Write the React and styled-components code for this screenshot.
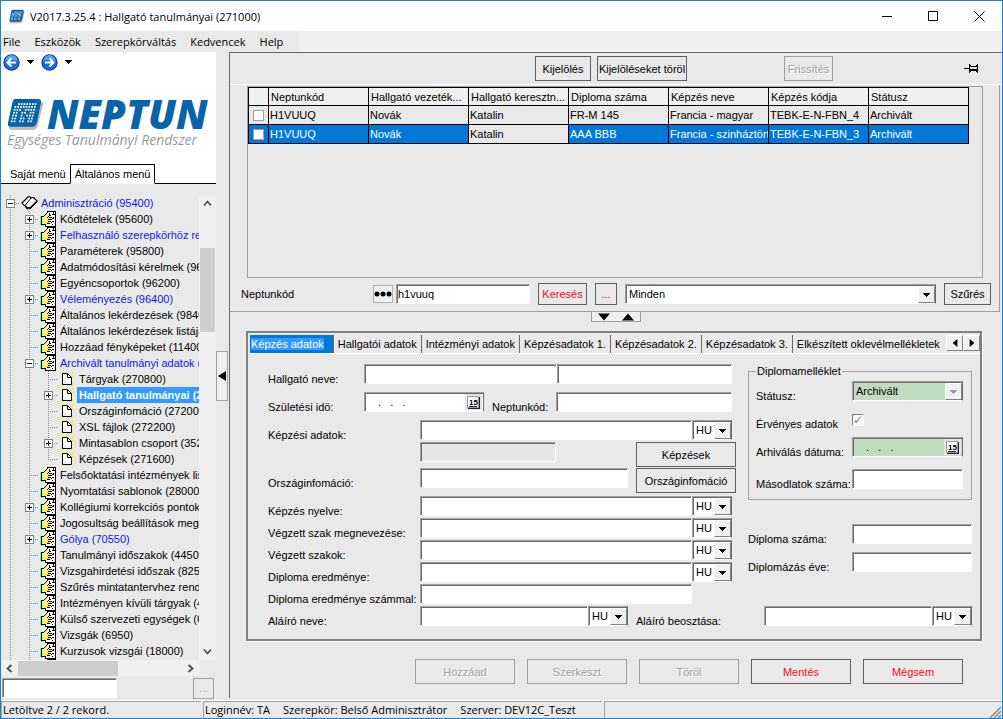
import React, { useState } from "react";
import styled, { createGlobalStyle, css } from "styled-components";

const UI_FONT = `"Liberation Sans", Arial, sans-serif`;
const TITLE_FONT = `"Open Sans", "Noto Sans", sans-serif`;

const menuItems = ["File", "Eszközök", "Szerepkörváltás", "Kedvencek", "Help"];

// level, label, expander sign, link colour
const treeItems = [
  { level: 0, label: "Adminisztráció (95400)", sign: "-", blue: true },
  { level: 1, label: "Kódtételek (95600)", sign: "+" },
  { level: 1, label: "Felhasználó szerepkörhöz rendelése (95700)", sign: "+", blue: true },
  { level: 1, label: "Paraméterek (95800)" },
  { level: 1, label: "Adatmódosítási kérelmek (96000)" },
  { level: 1, label: "Egyéncsoportok (96200)" },
  { level: 1, label: "Véleményezés (96400)", sign: "+", blue: true },
  { level: 1, label: "Általános lekérdezések (98400)" },
  { level: 1, label: "Általános lekérdezések listája (98600)" },
  { level: 1, label: "Hozzáad fényképeket (114000)" },
  { level: 1, label: "Archivált tanulmányi adatok (270600)", sign: "-", blue: true },
  { level: 2, label: "Tárgyak (270800)" },
  { level: 2, label: "Hallgató tanulmányai (271000)", sign: "+", selected: true },
  { level: 2, label: "Országinfomáció (272000)" },
  { level: 2, label: "XSL fájlok (272200)" },
  { level: 2, label: "Mintasablon csoport (352000)", sign: "+" },
  { level: 2, label: "Képzések (271600)", last: true },
  { level: 1, label: "Felsőoktatási intézmények listája (279000)" },
  { level: 1, label: "Nyomtatási sablonok (280000)" },
  { level: 1, label: "Kollégiumi korrekciós pontok (281000)", sign: "+" },
  { level: 1, label: "Jogosultság beállítások megtekintése" },
  { level: 1, label: "Gólya (70550)", sign: "+", blue: true },
  { level: 1, label: "Tanulmányi időszakok (4450)" },
  { level: 1, label: "Vizsgahirdetési időszak (82500)" },
  { level: 1, label: "Szűrés mintatantervhez rendelés" },
  { level: 1, label: "Intézményen kívüli tárgyak (4600)" },
  { level: 1, label: "Külső szervezeti egységek (6800)" },
  { level: 1, label: "Vizsgák (6950)" },
  { level: 1, label: "Kurzusok vizsgái (18000)" },
  { level: 1, label: "" },
];

const columns = [
  "Neptunkód",
  "Hallgató vezeték...",
  "Hallgató keresztn...",
  "Diploma száma",
  "Képzés neve",
  "Képzés kódja",
  "Státusz",
];

const rows = [
  ["H1VUUQ", "Novák", "Katalin", "FR-M 145", "Francia - magyar", "TEBK-E-N-FBN_4", "Archivált"],
  ["H1VUUQ", "Novák", "Katalin", "AAA BBB", "Francia - szinháztörténet", "TEBK-E-N-FBN_3", "Archivált"],
];

const formTabs = [
  "Képzés adatok",
  "Hallgatói adatok",
  "Intézményi adatok",
  "Képzésadatok 1.",
  "Képzésadatok 2.",
  "Képzésadatok 3.",
  "Elkészített oklevélmellékletek",
];

// dots of the NEPTUN mark
const markDots = ["01111111", "11111111", "11101111", "11011011", "11010111", "11011011", "11011011"];

const Caret = ({ color = "#000" }) => (
  <svg width="7" height="4" viewBox="0 0 7 4" shapeRendering="crispEdges">
    <path d="M0 0h7v1H6v1H5v1H4v1H3V3H2V2H1V1H0z" fill={color} />
  </svg>
);

const NeptunMark = ({ width, height }) => (
  <svg width={width} height={height} viewBox="0 0 36 32">
    <path d="M10 3h22q4 0 3 4l-5 20q-1 4-5 4H5q-4 0-3-4l4-20q1-4 4-4z" fill="#b9bcc0" />
    <path d="M8 1h22q4 0 3 4l-4 19q-1 4-5 4H4q-4 0-3-4L5 5q1-4 3-4z" fill="#0863a9" />
    {markDots.map((line, y) =>
      line.split("").map((dot, x) =>
        dot === "1" ? <rect key={`${x}-${y}`} x={8 + x * 2.7 - y * 0.7} y={5 + y * 2.8} width="1.7" height="1.7" fill="#fff" /> : null
      )
    )}
  </svg>
);

const RoundArrow = ({ flip }) => (
  <svg width="17" height="17" viewBox="0 0 17 17">
    <circle cx="8.5" cy="8.5" r="7.6" fill="#1d6fe0" stroke="#0b3c9c" strokeWidth="1.2" />
    <path d="M2.5 7a6 6 0 0 1 12 0q-6-3-12 0z" fill="#5aa4f5" />
    <path
      d="M13 8.5H5M8.5 4.5l-4 4 4 4"
      fill="none"
      stroke="#fff"
      strokeWidth="2"
      transform={flip ? "rotate(180 8.5 8.5)" : undefined}
    />
  </svg>
);

const BookIcon = () => (
  <svg width="17" height="14" viewBox="0 0 17 14">
    <path d="M1 7l6-6q2-1 3 1 2-1 3 0l3 3-7 7q-1-1-3 0-1-1-1-2-2 0-4-3z" fill="#fff" stroke="#000" strokeWidth="1.2" />
    <path d="M10 2L4 9.500M4 10l2 3q2-1 3 0l7-7" fill="none" stroke="#000" />
  </svg>
);

const HandIcon = () => (
  <svg width="17" height="17" viewBox="0 0 17 17" shapeRendering="crispEdges">
    <path d="M0 5h1v9H0zM1 14h2v1H1z" fill="#4ff" />
    <path d="M7 1h7l2 3v12H5v-3h2z" fill="#fff" />
    <path d="M2 6h3V5h1V4h1V3h2v3h3v2h-1v2h-1v3H5v1H2z" fill="#fff27a" />
    <path
      d="M7 0h8v1H7zM15 0h1v16h-1zM5 15h10v1H5zM1 5h3v1H1zM1 6h1v8H1zM2 13h3v1H2zM5 13h1v2H5zM4 4h1v1H4zM5 3h1v1H5zM6 2h1v1H6zM7 1h1v1H7zM9 2h1v3H9zM8 5h1v1H8zM7 6h1v1H7zM9 6h3v1H9zM12 7h1v1h-1zM8 8h4v1H8zM8 10h3v1H8zM7 12h3v1H7zM11 11h1v1h-1zM12 3h1v1h-1zM12 10h2v1h-2zM12 13h1v1h-1zM13 1h1v3h-1zM14 3h1v1h-1zM13 6h1v2h-1zM10 4h1v1h-1z"
      fill="#000"
    />
  </svg>
);

const PageIcon = () => (
  <svg width="15" height="16" viewBox="0 0 15 16">
    <path d="M1 1l2 2M6 0v2M14 1l-3 3M15 6h-3M14 14l-3-2M1 14l2-1" stroke="#f2ef5a" strokeWidth="2" />
    <path d="M2.500 2.500h5l4 4v7h-9z" fill="#fff" stroke="#000" />
    <path d="M7.500 2.500v4h4" fill="none" stroke="#000" />
  </svg>
);

const Chevron = ({ angle }) => (
  <svg width="9" height="9" viewBox="0 0 9 9">
    <path d="M1 6.500l3.500-4L8 6.500" fill="none" stroke="#505050" strokeWidth="1.800" transform={`rotate(${angle} 4.5 4.5)`} />
  </svg>
);

const Triangle = ({ angle = 0, size = 10 }) => (
  <svg width={size} height={size} viewBox="0 0 10 10">
    <path d="M0 2h10L5 8z" transform={`rotate(${angle} 5 5)`} />
  </svg>
);

const CalendarIcon = () => (
  <svg width="13" height="13" viewBox="0 0 13 13">
    <path d="M1 1h12v12H1z" fill="#223" />
    <path d="M.5 .5h11v11H.5z" fill="#fff" stroke="#99a" />
    <path d="M2 10h8v1H2z" fill="#223" />
    <text x="2" y="9" fontSize="8" fontWeight="bold" fontFamily="Liberation Sans">15</text>
  </svg>
);

const Combo = ({ label, options, grow, green, disabled, width }) => (
  <ComboBox $grow={grow} $green={green} $width={width}>
    <select aria-label={label} disabled={disabled}>
      {options.map((o) => (
        <option key={o}>{o}</option>
      ))}
    </select>
    <ComboArrow>
      <Caret color={disabled ? "#9a9a9a" : "#000"} />
    </ComboArrow>
  </ComboBox>
);

const DateField = ({ id, green }) => (
  <DateBox $green={green}>
    <input id={id} defaultValue=".   .   ." />
    <button aria-label="Naptár">
      <CalendarIcon />
    </button>
  </DateBox>
);

const LangRow = ({ id, label, height = 22, noLang }) => (
  <FormRow $height={height}>
    <Label htmlFor={id} $width={152}>{label}</Label>
    <Field id={id} />
    {noLang ? <Spacer $width={40} /> : <Combo label={`${label} nyelv`} options={["HU", "EN"]} width={40} />}
  </FormRow>
);

const TreeRow = ({ item }) => {
  const { level, label, sign, blue, selected, last } = item;
  const cells = [];
  for (let i = 0; i < level; i++) cells.push(<Guide key={i} />);
  return (
    <TreeLine role="treeitem">
      {cells}
      <Guide $branch $last={last}>
        {sign && (
          <svg width="9" height="9" viewBox="0 0 9 9" shapeRendering="crispEdges">
            <path d="M0 0h9v9H0z" fill="#808080" />
            <path d="M1 1h7v7H1z" fill="#fff" />
            <path d={sign === "+" ? "M2 4h5v1H2zM4 2h1v5H4z" : "M2 4h5v1H2z"} />
          </svg>
        )}
      </Guide>
      <TreeIcon>
        {level === 0 && <BookIcon />}
        {level === 1 && <HandIcon />}
        {level === 2 && <PageIcon />}
      </TreeIcon>
      <TreeText $blue={blue} $selected={selected}>{label}</TreeText>
    </TreeLine>
  );
};

const Sidebar = () => (
  <Side>
    <White>
      <NavRow>
        <button aria-label="Vissza"><RoundArrow /></button>
        <button aria-label="Előzmények"><Caret /></button>
        <button aria-label="Előre"><RoundArrow flip /></button>
        <button aria-label="Következők"><Caret /></button>
      </NavRow>
      <Logo>
        <NeptunMark width={37} height={33} />
        <LogoText>NEPTUN</LogoText>
      </Logo>
      <Slogan>Egységes Tanulmányi Rendszer</Slogan>
      <SideTabs>
        <SideTab>Saját menü</SideTab>
        <SideTab $active>Általános menü</SideTab>
        <TabFill />
      </SideTabs>
    </White>
    <TreeArea>
      <Tree role="tree">
        {treeItems.map((item, i) => (
          <TreeRow key={i} item={item} />
        ))}
      </Tree>
      <VScroll>
        <Chevron angle={0} />
        <VThumb />
        <Chevron angle={180} />
      </VScroll>
    </TreeArea>
    <HScroll>
      <Chevron angle={-90} />
      <HThumb />
      <Chevron angle={90} />
    </HScroll>
    <SideSearch>
      <Field aria-label="Menü keresése" />
      <Button $width={21} disabled>...</Button>
    </SideSearch>
  </Side>
);

const ListPanel = () => {
  const [selected, setSelected] = useState(1);
  return (
    <Upper>
      <GridBox>
        <Table>
          <thead>
            <tr>
              <th />
              {columns.map((c) => (
                <th key={c}>{c}</th>
              ))}
            </tr>
          </thead>
          <tbody>
            {rows.map((row, i) => (
              <Record key={i} $selected={selected === i} onClick={() => setSelected(i)}>
                <td><RowCheck type="checkbox" aria-label={`${i + 1}. sor`} /></td>
                {row.map((cell, j) => (
                  <td key={j}>{cell}</td>
                ))}
              </Record>
            ))}
          </tbody>
        </Table>
      </GridBox>
      <SearchRow>
        <SearchLabel htmlFor="kod">Neptunkód</SearchLabel>
        <DotsButton aria-label="Feltételek">
          <svg width="18" height="6" viewBox="0 0 18 6">
            <circle cx="3" cy="3" r="2.500" />
            <circle cx="9" cy="3" r="2.500" />
            <circle cx="15" cy="3" r="2.500" />
          </svg>
        </DotsButton>
        <SearchField id="kod" defaultValue="h1vuuq" />
        <Button $width={49} $red $height={22}>Keresés</Button>
        <Button $width={22} $red $height={22}>...</Button>
        <Combo label="Szűrő" options={["Minden"]} grow />
        <Button $width={47} $height={22}>Szűrés</Button>
      </SearchRow>
    </Upper>
  );
};

const DetailForm = () => {
  const [active, setActive] = useState(0);
  return (
    <Detail>
      <TabStrip role="tablist">
        {formTabs.map((t, i) => (
          <Tab key={t} role="tab" $active={active === i} onClick={() => setActive(i)}>
            <span>{t}</span>
          </Tab>
        ))}
        <TabScroll aria-label="Balra"><Triangle angle={90} size={8} /></TabScroll>
        <TabScroll aria-label="Jobbra"><Triangle angle={-90} size={8} /></TabScroll>
      </TabStrip>
      <FormBody>
        <FormColumns>
          <LeftColumn>
            <FormRow $height={28}>
              <Label htmlFor="nev" $width={96}>Hallgató neve:</Label>
              <Field id="nev" $grow={11} />
              <Field aria-label="Keresztnév" $grow={10} />
            </FormRow>
            <FormRow $height={28}>
              <Label htmlFor="szul" $width={96}>Születési idö:</Label>
              <DateSlot><DateField id="szul" /></DateSlot>
              <Label htmlFor="nk" $width={64}>Neptunkód:</Label>
              <Field id="nk" />
            </FormRow>
            <LangRow id="kepzesi" label="Képzési adatok:" />
            <FormRow $height={26} $wide>
              <Label as="span" $width={152} />
              <Field aria-label="Képzés kódja" disabled $fixed={136} />
              <Button $width={100}>Képzések</Button>
            </FormRow>
            <FormRow $height={28} $wide>
              <Label htmlFor="orszag" $width={152}>Országinfomáció:</Label>
              <Field id="orszag" />
              <Spacer $width={8} />
              <Button $width={100}>Országinfomáció</Button>
            </FormRow>
            <LangRow id="nyelv" label="Képzés nyelve:" />
            <LangRow id="megnev" label="Végzett szak megnevezése:" />
            <LangRow id="szakok" label="Végzett szakok:" />
            <LangRow id="eredmeny" label="Diploma eredménye:" />
            <LangRow id="szammal" label="Diploma eredménye számmal:" noLang />
          </LeftColumn>
          <RightColumn>
            <Group>
              <legend>Diplomamelléklet</legend>
              <FormRow $height={28} $wide>
                <Label $width={96}>Státusz:</Label>
                <Combo label="Státusz" options={["Archivált"]} grow green disabled />
              </FormRow>
              <FormRow $height={28} $wide>
                <Label htmlFor="erv" $width={96}>Érvényes adatok</Label>
                <ValidCheck id="erv" type="checkbox" defaultChecked />
              </FormRow>
              <FormRow $height={32} $wide>
                <Label htmlFor="arch" $width={96}>Arhiválás dátuma:</Label>
                <DateField id="arch" green />
              </FormRow>
              <FormRow $height={20} $wide>
                <Label htmlFor="masod" $width={96}>Másodlatok száma:</Label>
                <Field id="masod" />
              </FormRow>
            </Group>
            <FormRow $height={28} $wide>
              <Label htmlFor="dszam" $width={104}>Diploma száma:</Label>
              <Field id="dszam" />
            </FormRow>
            <FormRow $height={28} $wide>
              <Label htmlFor="dev" $width={104}>Diplomázás éve:</Label>
              <Field id="dev" />
            </FormRow>
          </RightColumn>
        </FormColumns>
        <FormRow $height={22} $wide>
          <Label htmlFor="alairo" $width={152}>Aláíró neve:</Label>
          <Field id="alairo" />
          <Combo label="Aláíró nyelv" options={["HU", "EN"]} width={40} />
          <Spacer $width={8} />
          <Label htmlFor="beoszt" $width={128}>Aláíró beosztása:</Label>
          <Field id="beoszt" />
          <Combo label="Beosztás nyelv" options={["HU", "EN"]} width={40} />
        </FormRow>
      </FormBody>
    </Detail>
  );
};

const App = () => (
  <>
    <GlobalStyle />
    <Window>
      <TitleBar>
        <NeptunMark width={16} height={15} />
        <h1>V2017.3.25.4 : Hallgató tanulmányai (271000)</h1>
        <WinButton aria-label="Kis méret">
          <svg width="11" height="11"><path d="M0 5.500h10" stroke="#000" /></svg>
        </WinButton>
        <WinButton aria-label="Teljes méret">
          <svg width="11" height="11"><path d="M.5 .5h9v9h-9z" stroke="#000" fill="none" /></svg>
        </WinButton>
        <WinButton aria-label="Bezárás">
          <svg width="11" height="11"><path d="M.5 .5l10 10M10.500 .5l-10 10" stroke="#000" /></svg>
        </WinButton>
      </TitleBar>
      <MenuBar>
        {menuItems.map((m) => (
          <button key={m}>{m}</button>
        ))}
      </MenuBar>
      <Body>
        <Sidebar />
        <Splitter>
          <button aria-label="Menü elrejtése">
            <svg width="8" height="10" viewBox="0 0 8 10"><path d="M8 0v10L0 5z" /></svg>
          </button>
        </Splitter>
        <Main>
          <Toolbar>
            <Button $width={56}>Kijelölés</Button>
            <Button $width={90}>Kijelöléseket töröl</Button>
            <Spacer $width={85} />
            <Button $width={49} disabled>Frissítés</Button>
            <Spacer $width={119} />
            <PinButton aria-label="Rögzítés">
              <svg width="15" height="11" viewBox="0 0 15 11" shapeRendering="crispEdges">
                <path d="M0 5h6v1H0zM5 1h1v9H5zM6 3h7v1H6zM6 7h7v1H6zM6 6h7v1H6zM13 1h1v9h-1zM12 2h1v1h-1zM12 8h1v1h-1zM6 2h1v1H6zM6 8h1v1H6z" />
              </svg>
            </PinButton>
          </Toolbar>
          <ListPanel />
          <Collapser>
            <button aria-label="Le"><Triangle size={12} /></button>
            <button aria-label="Fel"><Triangle angle={180} size={12} /></button>
          </Collapser>
          <DetailForm />
          <Actions>
            <Button $width={100} disabled>Hozzáad</Button>
            <Button $width={100} disabled>Szerkeszt</Button>
            <Button $width={100} disabled>Töröl</Button>
            <Button $width={100} $red>Mentés</Button>
            <Button $width={100} $red>Mégsem</Button>
          </Actions>
        </Main>
      </Body>
      <StatusBar>
        <StatusCell>Letöltve 2 / 2 rekord.</StatusCell>
        <StatusCell>
          <span>Loginnév: TA</span>
          <span>Szerepkör: Belső Adminisztrátor</span>
          <span>Szerver: DEV12C_Teszt</span>
        </StatusCell>
        <StatusCell>
          <svg width="12" height="12" viewBox="0 0 12 12"><path d="M1 12L12 1M5 12l7-7M9 12l3-3" stroke="#8a8a8a" strokeWidth="1.500" /></svg>
        </StatusCell>
      </StatusBar>
    </Window>
  </>
);

export default App;

const GlobalStyle = createGlobalStyle`
  * {
    box-sizing: border-box;
  }
  body {
    margin: 0;
    font: 11px ${UI_FONT};
    color: #000;
    background: #e9e9e9;
  }
  button, input, select {
    font: inherit;
    color: inherit;
    padding: 0;
    margin: 0;
    border-radius: 0;
  }
  button {
    border: 0;
    background: none;
  }
  svg {
    display: block;
    flex: none;
  }
`;

const sunken = css`
  border: 1px solid;
  border-color: #a0a0a0 #fff #fff #a0a0a0;
  padding: 1px;
  box-shadow: inset 1px 1px #696969;
`;

const raised = css`
  border: 1px solid;
  border-color: #fff #808080 #808080 #fff;
  background: #f0f0f0;
`;

const Window = styled.div`
  display: flex;
  flex-direction: column;
  height: 100vh;
  border: 1px solid #1883d7;
  border-top-color: #3c77b0;
  background: #e9e9e9;
`;

const TitleBar = styled.header`
  display: flex;
  align-items: center;
  height: 30px;
  flex: none;
  padding-left: 8px;
  background: #fff;
  font-family: ${TITLE_FONT};

  h1 {
    flex: 1;
    margin: 0 0 0 5px;
    font-size: 11px;
    font-weight: 400;
    white-space: nowrap;
  }
`;

const WinButton = styled.button`
  display: flex;
  align-items: center;
  justify-content: center;
  width: 46px;
  height: 28px;
`;

const MenuBar = styled.nav`
  display: flex;
  align-items: center;
  gap: 14px;
  height: 21px;
  flex: none;
  padding-left: 2px;
  background: linear-gradient(90deg, #e9e9e9 298px, #f0f0f0 298px);
  font: 11px ${TITLE_FONT};
`;

const Body = styled.div`
  display: flex;
  flex: 1;
  min-height: 0;
`;

const Side = styled.aside`
  display: flex;
  flex-direction: column;
  width: 215px;
  flex: none;
`;

const White = styled.div`
  background: #fff;
`;

const NavRow = styled.div`
  display: flex;
  align-items: center;
  gap: 7px;
  height: 20px;
  padding-left: 2px;
`;

const Logo = styled.div`
  display: flex;
  align-items: center;
  gap: 3px;
  height: 36px;
  margin-top: 24px;
  padding-left: 6px;
`;

const LogoText = styled.strong`
  color: #0863a9;
  font: italic 800 40px/36px ${TITLE_FONT};
`;

const Slogan = styled.div`
  height: 20px;
  padding-left: 6px;
  color: #9b9b9b;
  font: italic 14px/16px ${TITLE_FONT};
  white-space: nowrap;
`;

const SideTabs = styled.div`
  display: flex;
  margin-top: 12px;
  height: 20px;
`;

const SideTab = styled.button`
  display: flex;
  align-items: center;
  white-space: nowrap;
  border-bottom: 1px solid #000;
  padding: 0 4px 0 9px;

  ${(p) =>
    p.$active &&
    css`
      border: 1px solid #000;
      border-bottom-color: #fff;
      padding: 0 4px;
    `}
`;

const TabFill = styled.span`
  flex: 1;
  border-bottom: 1px solid #000;
`;

const TreeArea = styled.div`
  display: flex;
  flex: 1;
  min-height: 0;
  padding-top: 11px;
`;

const Tree = styled.div`
  flex: 1;
  min-width: 0;
  overflow: hidden;
`;

const TreeLine = styled.div`
  display: flex;
  height: 16px;
`;

const dotted = "repeating-linear-gradient(#8a8a8a 0 1px, transparent 1px 2px)";
const dottedX = "repeating-linear-gradient(90deg, #8a8a8a 0 1px, transparent 1px 2px)";

const Guide = styled.span`
  display: flex;
  align-items: center;
  justify-content: center;
  width: 19px;
  flex: none;
  background-image: ${dotted}, ${(p) => (p.$branch ? dottedX : "none")};
  background-size: 1px ${(p) => (p.$last ? "8px" : "16px")}, 10px 1px;
  background-position: 9px 0, 9px 8px;
  background-repeat: no-repeat;
`;

const TreeIcon = styled.span`
  display: flex;
  align-items: center;
  justify-content: center;
  width: 19px;
  flex: none;
`;

const TreeText = styled.span`
  padding: 0 2px;
  line-height: 16px;
  white-space: nowrap;
  color: ${(p) => (p.$selected ? "#fff" : p.$blue ? "#1414f0" : "#000")};
  background: ${(p) => (p.$selected ? "#3399ff" : "none")};
  font-weight: ${(p) => (p.$selected ? 700 : 400)};
`;

const VScroll = styled.div`
  display: flex;
  flex-direction: column;
  align-items: center;
  justify-content: space-between;
  width: 17px;
  padding: 4px 0;
  background: #f0f0f0;
`;

const VThumb = styled.div`
  width: 15px;
  height: 84px;
  margin: 40px 0 auto;
  background: #cdcdcd;
`;

const HScroll = styled.div`
  display: flex;
  align-items: center;
  height: 16px;
  margin-right: 16px;
  padding: 0 5px 0 4px;
  background: #f0f0f0;
`;

const HThumb = styled.div`
  width: 100px;
  height: 15px;
  margin: 0 auto 0 4px;
  background: #cdcdcd;
`;

const Field = styled.input`
  ${sunken}
  flex: ${(p) => (p.$fixed ? "none" : p.$grow || 1)};
  width: ${(p) => (p.$fixed ? `${p.$fixed}px` : "0")};
  min-width: 0;
  height: 20px;
  background: #fff;

  &:disabled {
    background: #e6e6e6;
  }
`;

const SideSearch = styled.div`
  display: flex;
  justify-content: space-between;
  align-items: center;
  height: 24px;
  padding: 0 2px 0 1px;

  ${Field} {
    flex: none;
    width: 115px;
  }
  button {
    height: 21px;
  }
`;

const Splitter = styled.div`
  display: flex;
  align-items: center;
  width: 13px;
  flex: none;

  button {
    display: flex;
    align-items: center;
    justify-content: center;
    width: 12px;
    height: 50px;
    border: 1px solid #a0a0a0;
    background: #f0f0f0;
  }
`;

const Main = styled.main`
  display: flex;
  flex-direction: column;
  flex: 1;
  min-width: 0;
  margin-bottom: 2px;
  border-left: 1px solid #696969;
  border-top: 1px solid #696969;
`;

const Button = styled.button`
  width: ${(p) => p.$width}px;
  height: ${(p) => p.$height || 25}px;
  flex: none;
  border: 1px solid #606060;
  background: #e9e9e9;
  color: ${(p) => (p.$red ? "#f01020" : "#000")};
  white-space: nowrap;

  &:disabled {
    border-color: #a0a0a0;
    color: #a0a0a0;
    text-shadow: 1px 1px #fff;
  }
`;

const Spacer = styled.span`
  width: ${(p) => p.$width}px;
  flex: none;
`;

const Toolbar = styled.div`
  display: flex;
  align-items: center;
  justify-content: flex-end;
  gap: 6px;
  height: 32px;
  flex: none;
  padding-right: 23px;
  border-bottom: 1px solid #fff;
`;

const PinButton = styled.button`
  width: 15px;
`;

const Upper = styled.section`
  display: flex;
  flex-direction: column;
  flex: 1;
  min-height: 0;
  margin-right: 2px;
  border-right: 1px solid #a0a0a0;
  border-bottom: 1px solid #a0a0a0;
`;

const GridBox = styled.div`
  flex: 1;
  min-height: 60px;
  overflow: hidden;
  margin: 1px 16px 0 17px;
  border: 1px solid #a0a0a0;
`;

const Table = styled.table`
  table-layout: fixed;
  width: 721px;
  border-collapse: collapse;

  th, td {
    height: 19px;
    padding: 0 0 0 1px;
    border: 1px solid #000;
    overflow: hidden;
    text-align: left;
    font-weight: 400;
    white-space: nowrap;
  }
  th {
    height: 18px;
    padding-left: 2px;
    background: #f0f0f0;
  }
  th:first-child {
    width: 20px;
  }
`;

const Record = styled.tr`
  ${(p) =>
    p.$selected &&
    css`
      background: #0078d7;
      color: #fff;

      td:nth-child(4) {
        background: #e9e9e9;
        color: #000;
      }
    `}
`;

const RowCheck = styled.input`
  appearance: none;
  display: block;
  width: 11px;
  height: 11px;
  margin-left: 3px;
  border: 1px solid #a0a0a0;
  background: #fff;
`;

const SearchRow = styled.div`
  display: flex;
  align-items: center;
  gap: 8px;
  height: 33px;
  flex: none;
  padding: 0 8px 1px 11px;
`;

const SearchLabel = styled.label`
  width: 124px;
`;

const DotsButton = styled.button`
  width: 20px;
  height: 18px;
  border: 1px solid #b0b0b0;
  background: #f0f0f0;
`;

const SearchField = styled(Field)`
  flex: none;
  width: 134px;
  margin-left: -5px;
`;

const ComboBox = styled.div`
  ${sunken}
  position: relative;
  flex: ${(p) => (p.$grow ? "1" : "none")};
  width: ${(p) => (p.$width ? `${p.$width}px` : "auto")};
  height: 20px;
  border-right-color: #696969;
  background: ${(p) => (p.$green ? "#c0dcc0" : "#fff")};

  select {
    appearance: none;
    display: block;
    width: 100%;
    height: 16px;
    padding-left: 2px;
    border: 0;
    background: none;
    color: #000;
    opacity: 1;
  }
`;

const ComboArrow = styled.span`
  ${raised}
  position: absolute;
  top: 1px;
  right: 0;
  display: flex;
  align-items: center;
  justify-content: center;
  width: 17px;
  height: 17px;
  pointer-events: none;
`;

const DateBox = styled.div`
  ${sunken}
  display: flex;
  flex: 1;
  min-width: 0;
  height: 20px;
  border-right-color: #696969;
  background: ${(p) => (p.$green ? "#c0dcc0" : "#fff")};

  input {
    flex: 1;
    width: 0;
    min-width: 0;
    padding-left: 12px;
    border: 0;
    background: none;
    white-space: pre;
  }
  button {
    display: flex;
    align-items: center;
    justify-content: center;
    width: 17px;
    background: #e4e4e4;
  }
`;

const DateSlot = styled.div`
  display: flex;
  width: 120px;
  margin-right: 8px;
`;

const Collapser = styled.div`
  display: flex;
  align-self: center;
  align-items: center;
  justify-content: space-around;
  width: 50px;
  height: 10px;
  flex: none;
  border: 1px solid #a0a0a0;
  border-top: 0;
  background: #f0f0f0;
`;

const Detail = styled.section`
  flex: none;
  margin: 9px 20px 0 16px;
  border: 2px solid #808080;
  box-shadow: 1px 1px #fff;
`;

const TabStrip = styled.div`
  display: flex;
  align-items: flex-start;
  height: 21px;
  padding: 2px 0 0 2px;
  border-bottom: 1px solid #fff;
`;

const Tab = styled.button`
  flex: none;
  height: 18px;
  padding: 0 4px;
  border-right: 1px solid #696969;
  white-space: nowrap;
  text-align: left;

  &:nth-last-child(3) {
    flex: 1;
    min-width: 0;
    overflow: hidden;
    border-right: 0;
  }

  ${(p) =>
    p.$active &&
    css`
      padding: 0 9px 0 1px;
      background: #0078d7;
      color: #fff;

      span {
        display: block;
        background: #3399ff;
      }
    `}
`;

const TabScroll = styled.button`
  ${raised}
  display: flex;
  align-items: center;
  justify-content: center;
  width: 17px;
  height: 16px;
  flex: none;
`;

const FormBody = styled.div`
  padding: 10px 8px 11px 20px;
`;

const FormColumns = styled.div`
  display: flex;
  gap: 12px;
`;

const LeftColumn = styled.div`
  flex: 1;
  min-width: 0;
`;

const RightColumn = styled.div`
  width: 224px;
  flex: none;
`;

const FormRow = styled.div`
  display: flex;
  align-items: flex-start;
  justify-content: space-between;
  height: ${(p) => p.$height}px;
  padding-right: ${(p) => (p.$wide ? 0 : 4)}px;
`;

const Label = styled.label`
  width: ${(p) => p.$width}px;
  flex: none;
  padding-top: 8px;
  line-height: 14px;
  white-space: nowrap;

  & + ${Field}:disabled + button {
    margin-left: auto;
  }
`;

const Group = styled.fieldset`
  margin: 0 0 24px;
  padding: 3px 8px 10px 7px;
  border: 1px solid #a0a0a0;

  legend {
    padding: 0 1px;
    line-height: 14px;
  }
`;

const ValidCheck = styled.input`
  appearance: none;
  display: flex;
  align-items: center;
  justify-content: center;
  width: 12px;
  height: 12px;
  margin: 5px auto 0 0;
  border: 1px solid;
  border-color: #808080 #fff #fff #808080;
  background: #f4f4f4;

  &:checked::before {
    content: "✓";
    color: #8a8a8a;
    font: bold 12px "DejaVu Sans", sans-serif;
  }
`;

const Actions = styled.div`
  display: flex;
  justify-content: flex-end;
  gap: 12px;
  flex: none;
  padding: 18px 39px 14px 0;
`;

const StatusBar = styled.footer`
  display: grid;
  grid-template-columns: 200px 399px 1fr;
  gap: 2px;
  height: 18px;
  flex: none;
  border-top: 1px solid #fff;
  font: 11px/16px ${TITLE_FONT};
`;

const StatusCell = styled.div`
  display: flex;
  gap: 13px;
  padding-left: 1px;
  border-top: 1px solid #a0a0a0;
  border-left: 1px solid #a0a0a0;
  white-space: nowrap;

  svg {
    margin: 4px 1px 0 auto;
  }
`;
